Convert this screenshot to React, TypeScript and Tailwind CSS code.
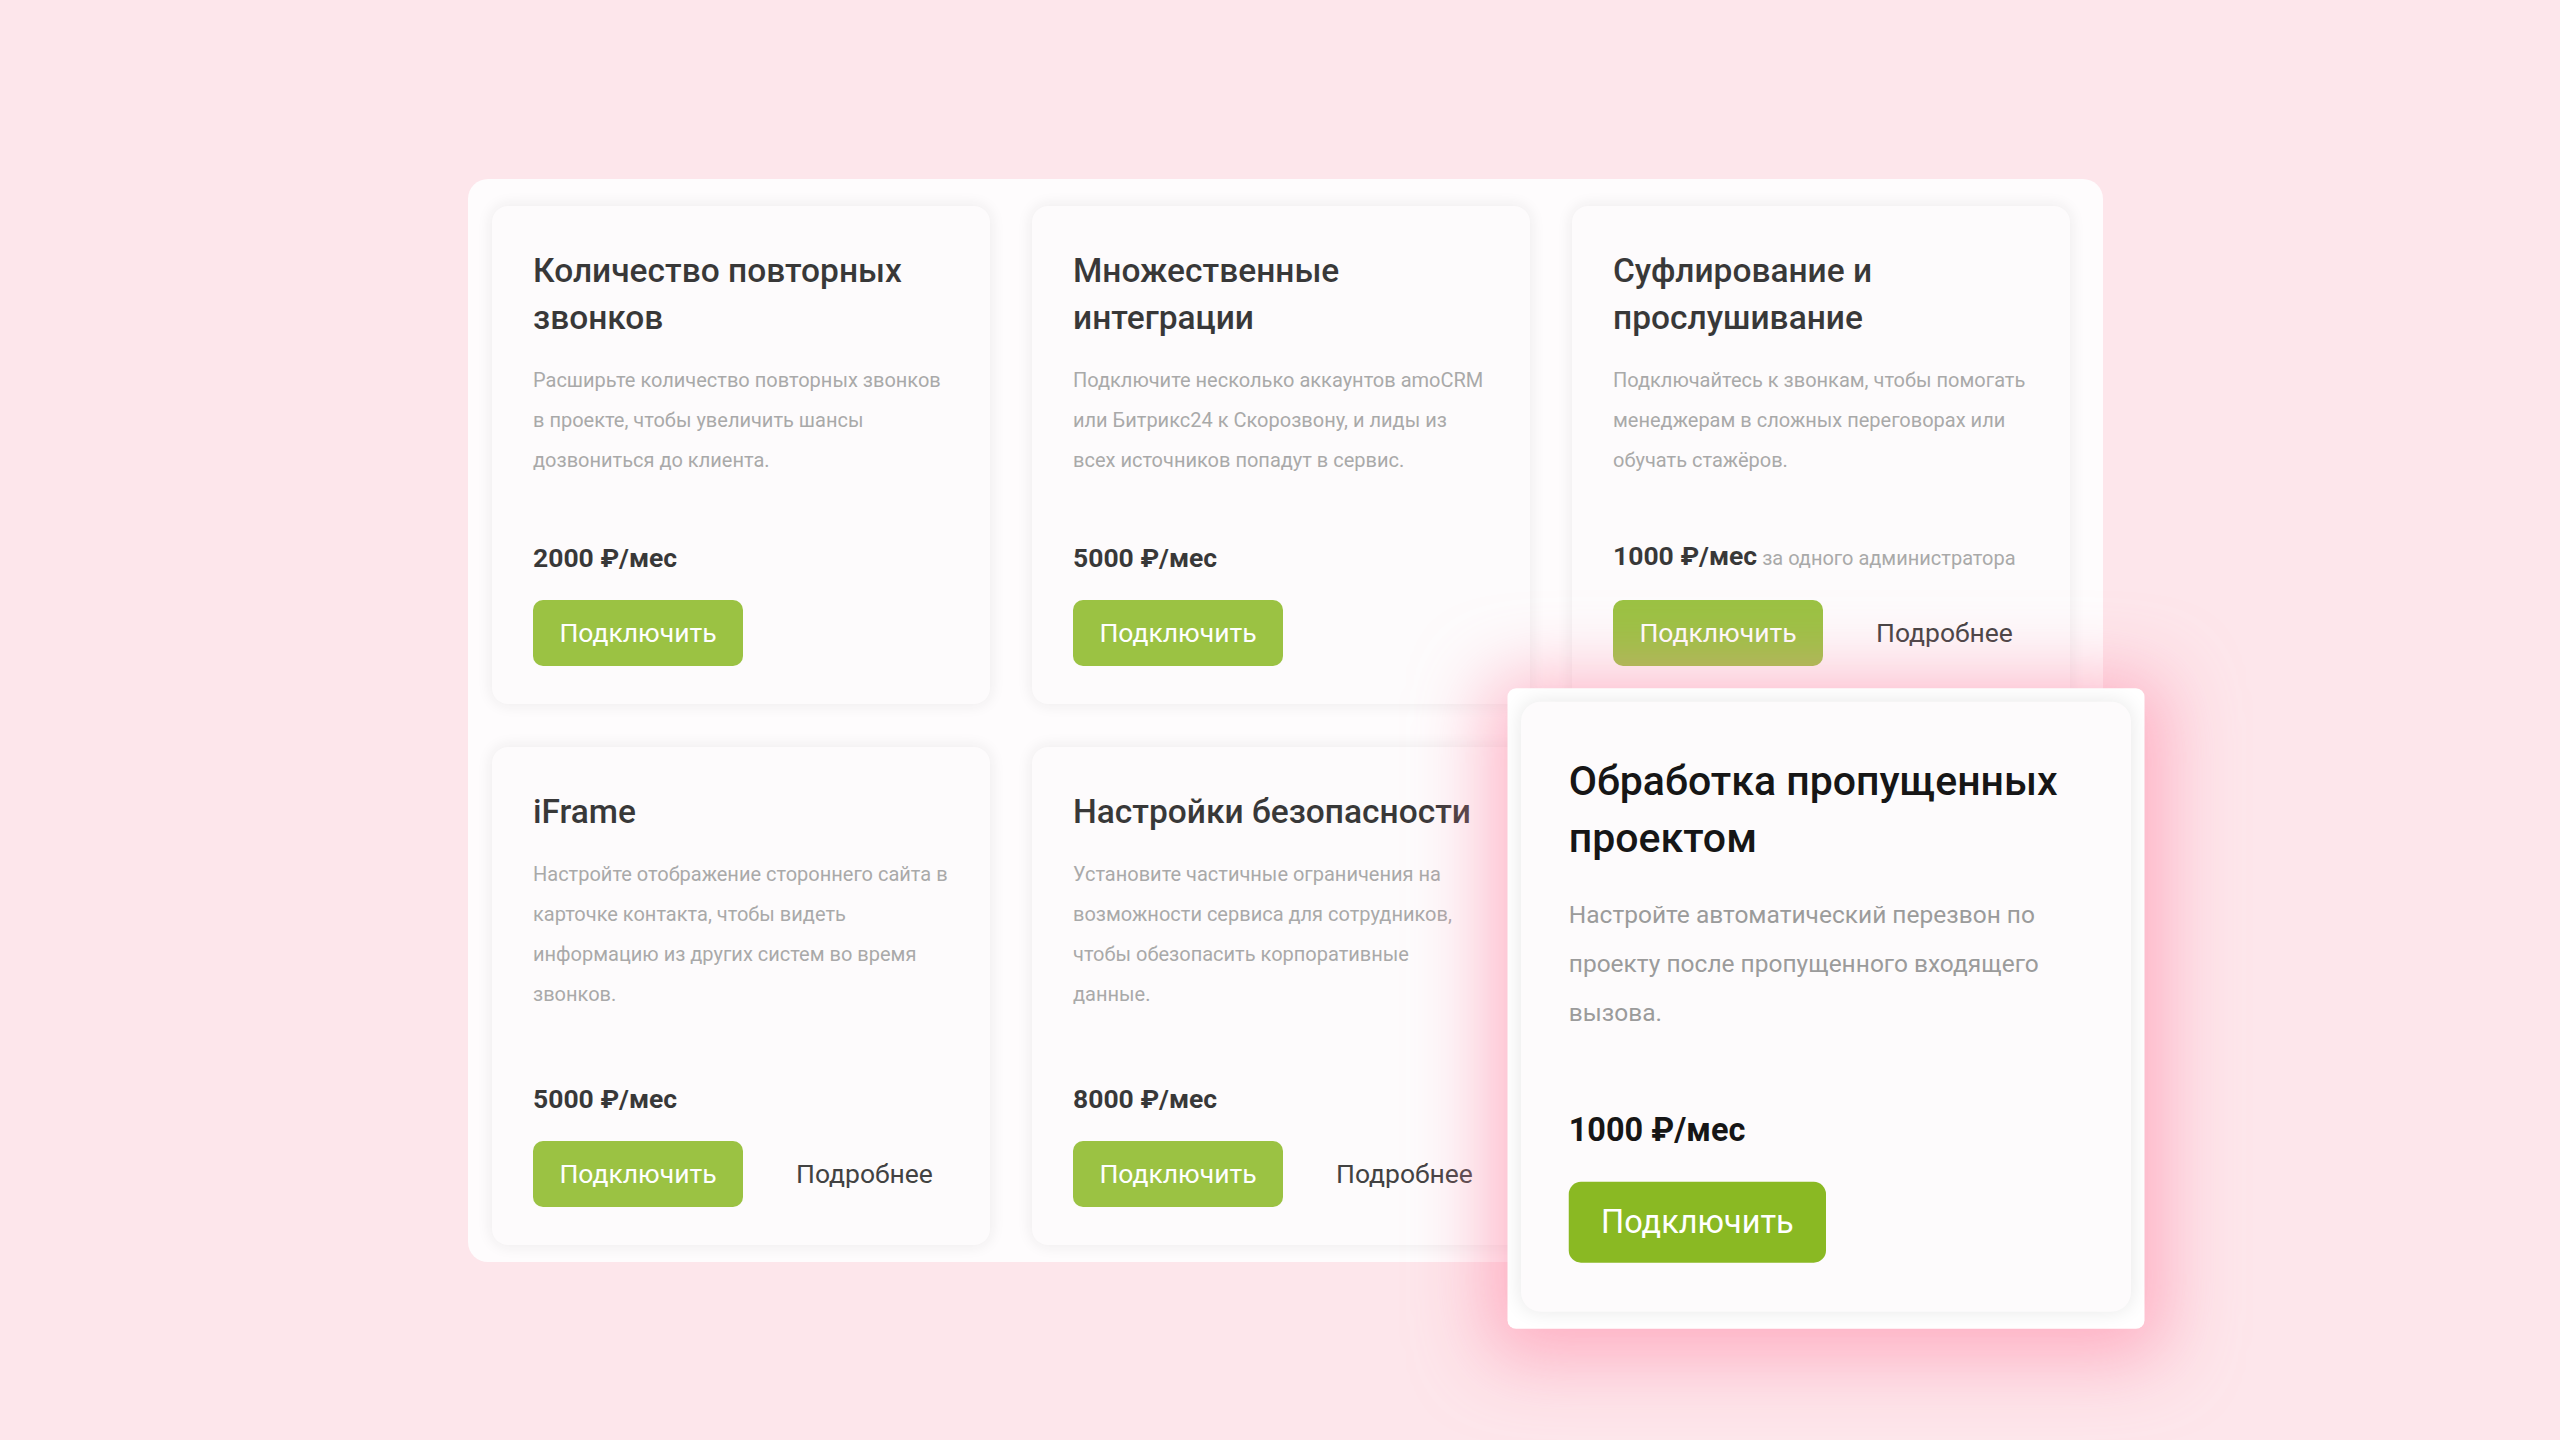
import React from "react";

type Card = {
  title: string[];
  desc: string[];
  price: string;
  note?: string;
  more?: boolean;
};

const cards: Card[] = [
  {
    title: ["Количество повторных", "звонков"],
    desc: [
      "Расширьте количество повторных звонков",
      "в проекте, чтобы увеличить шансы",
      "дозвониться до клиента.",
    ],
    price: "2000 ₽/мес",
  },
  {
    title: ["Множественные", "интеграции"],
    desc: [
      "Подключите несколько аккаунтов amoCRM",
      "или Битрикс24 к Скорозвону, и лиды из",
      "всех источников попадут в сервис.",
    ],
    price: "5000 ₽/мес",
  },
  {
    title: ["Суфлирование и", "прослушивание"],
    desc: [
      "Подключайтесь к звонкам, чтобы помогать",
      "менеджерам в сложных переговорах или",
      "обучать стажёров.",
    ],
    price: "1000 ₽/мес",
    note: "за одного администратора",
    more: true,
  },
  {
    title: ["iFrame"],
    desc: [
      "Настройте отображение стороннего сайта в",
      "карточке контакта, чтобы видеть",
      "информацию из других систем во время",
      "звонков.",
    ],
    price: "5000 ₽/мес",
    more: true,
  },
  {
    title: ["Настройки безопасности"],
    desc: [
      "Установите частичные ограничения на",
      "возможности сервиса для сотрудников,",
      "чтобы обезопасить корпоративные",
      "данные.",
    ],
    price: "8000 ₽/мес",
    more: true,
  },
];

const featured: Card = {
  title: ["Обработка пропущенных", "проектом"],
  desc: [
    "Настройте автоматический перезвон по",
    "проекту после пропущенного входящего",
    "вызова.",
  ],
  price: "1000 ₽/мес",
};

function CardBody({ c, big }: { c: Card; big?: boolean }) {
  return (
    <div
      className={
        big
          ? "w-[498px] h-[498px] rounded-[16px] bg-[#fdfbfc] shadow-[0_0_16px_rgba(0,0,0,0.09)] pt-[41px] pl-[39px] pr-[38px] pb-[40px] flex flex-col"
          : "w-[498px] h-[498px] rounded-[16px] bg-[#fdfbfc] shadow-[0_0_16px_rgba(0,0,0,0.09)] pt-[41px] pl-[41px] pr-[38px] pb-[38px] flex flex-col"
      }
    >
      <h3 className="text-[33.5px] leading-[47px] font-medium text-[#161616] whitespace-nowrap">
        {c.title.map((t, i) => (
          <span key={i} className="block">
            {t}
          </span>
        ))}
      </h3>
      <p className="mt-[19px] text-[20px] leading-[40px] text-[#9b9b9b] whitespace-nowrap">
        {c.desc.map((t, i) => (
          <span key={i} className="block">
            {t}
          </span>
        ))}
      </p>
      <div className="mt-auto">
        <div className="text-[26.5px] leading-[36px] font-bold text-[#161616] whitespace-nowrap">
          {c.price}
          {c.note && (
            <span className="text-[20px] font-normal text-[#9b9b9b]"> {c.note}</span>
          )}
        </div>
        <div className="mt-6 flex items-center">
          <button className="h-[66px] w-[210px] rounded-[10px] bg-[#8ab923] text-white text-[26.5px] font-normal">
            Подключить
          </button>
          {c.more && (
            <span className="ml-[53px] text-[26.5px] text-[#222]">Подробнее</span>
          )}
        </div>
      </div>
    </div>
  );
}

export default function App() {
  return (
    <div className="w-full h-screen bg-[#fde6eb] flex items-center justify-center pl-[11px] font-[Roboto,sans-serif]">
      <div className="bg-[#fefcfd] rounded-[20px] pt-[27px] pb-[17px] pl-[24px] pr-[33px]">
        <div className="grid grid-cols-[repeat(3,498px)] grid-rows-[repeat(2,498px)] gap-x-[42px] gap-y-[43px]">
          {cards.map((c, i) => (
            <div key={i} className="opacity-[0.85]">
              <CardBody c={c} />
            </div>
          ))}
          <div className="relative z-10 -ml-[11px] -mt-[11px] w-[520px] h-[523px] pt-[11px] pb-[14px] px-[11px] bg-white rounded-[7px] shadow-[0_8px_60px_16px_rgba(255,140,170,0.62)] translate-x-[5px] translate-y-[11px] scale-[1.225]">
            <CardBody c={featured} big />
          </div>
        </div>
      </div>
    </div>
  );
}
